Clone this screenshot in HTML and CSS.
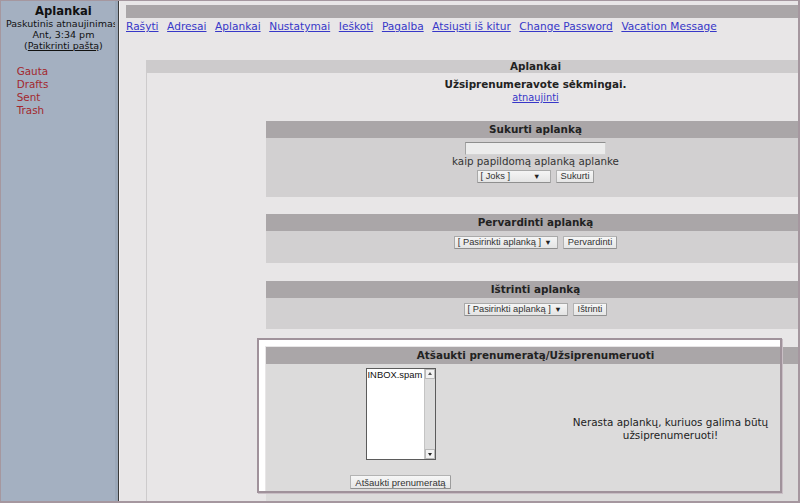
FILE: index.html
```html
<!DOCTYPE html>
<html lang="lt">
<head>
<meta charset="utf-8">
<title>Aplankai</title>
<link rel="stylesheet" href="styles.css">
</head>
<body>
<div class="window">
  <aside class="sidebar">
    <div class="status">
      <div class="status-title">Aplankai</div>
      <div class="status-line">Paskutinis atnaujinimas:</div>
      <div class="status-line">Ant, 3:34 pm</div>
      <div class="status-line">(<a class="status-link" href="#">Patikrinti paštą</a>)</div>
    </div>
    <ul class="folders">
      <li><a class="folder" href="#">Gauta</a></li>
      <li><a class="folder" href="#">Drafts</a></li>
      <li><a class="folder" href="#">Sent</a></li>
      <li><a class="folder" href="#">Trash</a></li>
    </ul>
  </aside>
  <main class="main">
    <div class="doc">
      <div class="topbar"></div>
      <nav class="menu">
        <a href="#">Rašyti</a>
        <a href="#">Adresai</a>
        <a href="#">Aplankai</a>
        <a href="#">Nustatymai</a>
        <a href="#">Ieškoti</a>
        <a href="#">Pagalba</a>
        <a href="#">Atsiųsti iš kitur</a>
        <a href="#">Change Password</a>
        <a href="#">Vacation Message</a>
      </nav>
      <div class="panel">
        <div class="panel-head">Aplankai</div>
        <div class="panel-body">
          <div class="notice">
            <div class="notice-title">Užsiprenumeravote sėkmingai.</div>
            <div><a class="notice-link" href="#">atnaujinti</a></div>
          </div>

          <section class="box box-create">
            <div class="box-head">Sukurti aplanką</div>
            <div class="box-body">
              <input class="text-input" type="text">
              <div class="hint">kaip papildomą aplanką aplanke</div>
              <div class="controls">
                <span class="select select-short"><span class="select-text">[ Joks ]</span><span class="select-arrow">▼</span></span>
                <button class="btn" type="button">Sukurti</button>
              </div>
            </div>
          </section>

          <section class="box box-rename">
            <div class="box-head">Pervardinti aplanką</div>
            <div class="box-body">
              <div class="controls">
                <span class="select select-long"><span class="select-text">[ Pasirinkti aplanką ]</span><span class="select-arrow">▼</span></span>
                <button class="btn" type="button">Pervardinti</button>
              </div>
            </div>
          </section>

          <section class="box box-delete">
            <div class="box-head">Ištrinti aplanką</div>
            <div class="box-body">
              <div class="controls">
                <span class="select select-long"><span class="select-text">[ Pasirinkti aplanką ]</span><span class="select-arrow">▼</span></span>
                <button class="btn" type="button">Ištrinti</button>
              </div>
            </div>
          </section>

          <section class="box box-subscribe">
            <div class="box-head">Atšaukti prenumeratą/Užsiprenumeruoti</div>
            <div class="box-body sub-grid">
              <div class="sub-left">
                <div class="listbox">
                  <div class="listbox-items"><div class="listbox-item">INBOX.spam</div></div>
                  <div class="scrollbar">
                    <span class="scroll-btn scroll-up"></span>
                    <span class="scroll-track"></span>
                    <span class="scroll-btn scroll-down"></span>
                  </div>
                </div>
                <button class="btn btn-tall" type="button">Atšaukti prenumeratą</button>
              </div>
              <div class="sub-right">Nerasta aplankų, kuriuos galima būtų užsiprenumeruoti!</div>
            </div>
          </section>
        </div>
      </div>
    </div>
  </main>
  <div class="highlight"></div>
</div>
</body>
</html>
```

FILE: styles.css
```css
* { box-sizing: border-box; }

html, body {
  margin: 0;
  padding: 0;
}

body {
  background: #ffffff;
  font-family: "DejaVu Sans", Verdana, sans-serif;
  color: #222222;
}

.window {
  position: relative;
  width: 800px;
  height: 503px;
  display: flex;
  overflow: hidden;
  background: #e8e6e7;
  border: 1px solid #a5979f;
  border-right-width: 2px;
  border-bottom-width: 2px;
}

/* ---------- left frame ---------- */
.sidebar {
  flex: none;
  width: 117px;
  background: #a4b0c1;
  border-right: 3px solid #9ba8b9;
  overflow: hidden;
}

.status {
  width: max-content;
  padding-left: 5px;
  text-align: center;
  white-space: nowrap;
  color: #111111;
}

.status-title {
  margin-top: 4px;
  font-size: 11.6px;
  line-height: 13px;
  font-weight: bold;
}

.status-line {
  font-size: 9.5px;
  line-height: 11px;
}

.status-link {
  color: #111111;
  text-decoration: underline;
}

.folders {
  list-style: none;
  margin: 14px 0 0;
  padding: 0 0 0 15.7px;
  font-size: 10.4px;
  line-height: 13px;
}

.folder {
  color: #a3282e;
  text-decoration: none;
}

/* ---------- right frame ---------- */
.main {
  flex: 1;
  min-width: 0;
  overflow: hidden;
  border-left: 1px solid #3b3b3b;
  box-shadow: inset 1px 0 0 #f4f2f3;
}

.doc {
  width: 820px;
  margin-left: 7px;
}

.topbar {
  height: 13px;
  margin-top: 4px;
  background: #aaa6a8;
}

.menu {
  display: flex;
  gap: 8.6px;
  margin-top: 1px;
  font-size: 10.6px;
  line-height: 14px;
  white-space: nowrap;
}

.menu a {
  color: #3737c8;
  text-decoration: underline;
}

.panel {
  width: 779px;
  margin: 27px 0 0 20px;
  border: 1px solid #cdcbcc;
  border-top: 0;
  padding-bottom: 40px;
}

.panel-head {
  height: 13px;
  line-height: 13px;
  background: #cdcbcc;
  text-align: center;
  font-size: 10.4px;
  font-weight: bold;
  color: #222222;
}

.notice {
  padding-top: 5px;
  text-align: center;
  font-size: 10.4px;
  line-height: 13px;
}

.notice-title {
  font-weight: bold;
}

.notice-link {
  font-size: 9.8px;
  color: #3737c8;
  text-decoration: underline;
}

.box {
  width: 540px;
  margin: 17px auto 0;
}

.box-rename { margin-top: 17px; }
.box-delete { margin-top: 18px; }
.box-subscribe { margin-top: 18px; }

.box-head {
  height: 17px;
  line-height: 17px;
  background: #aaa6a8;
  text-align: center;
  font-size: 10.4px;
  font-weight: bold;
  color: #222222;
}

.box-body {
  background: #d2d0d1;
  text-align: center;
  padding: 5px 0 14px;
}

.box-create .box-body { padding: 4px 0 14px; }
.box-delete .box-body { padding: 5px 0 13px; }

.text-input {
  display: block;
  width: 141px;
  height: 13px;
  margin: 0 auto;
  padding: 0;
  background: #ececec;
  border: 1px solid #d4d4d4;
  border-top-color: #8e8e8e;
  border-left-color: #a4a4a4;
}

.hint {
  font-size: 10.3px;
  line-height: 12px;
  color: #333333;
}

.controls {
  display: flex;
  justify-content: center;
  gap: 5px;
}

.box-create .controls { margin-top: 3px; }

.select {
  position: relative;
  display: inline-block;
  height: 13px;
  padding-left: 3px;
  text-align: left;
  background: linear-gradient(#f5f5f5, #e4e4e4);
  border: 1px solid #a9a9a9;
  border-bottom-color: #8f8f8f;
  border-radius: 1px;
  font-family: "Liberation Sans", Arial, sans-serif;
  font-size: 9.3px;
  line-height: 11px;
  color: #333333;
}

.select-short { width: 74px; }
.select-long { width: 104px; }

.select-arrow {
  position: absolute;
  right: 5px;
  top: 0;
  font-size: 7.5px;
  line-height: 11px;
  color: #222222;
}

.select-short .select-arrow { right: 9px; }

.btn {
  height: 13px;
  margin: 0;
  padding: 0 4px;
  background: linear-gradient(#f6f6f6, #e6e6e6);
  border: 1px solid #b3b3b3;
  border-bottom-color: #909090;
  border-right-color: #9c9c9c;
  border-radius: 1px;
  font-family: "Liberation Sans", Arial, sans-serif;
  font-size: 9.3px;
  line-height: 11px;
  color: #333333;
}

.btn-tall {
  height: 14px;
  margin-top: 15px;
  font-size: 9.5px;
}

/* subscribe / unsubscribe */
.sub-grid {
  display: grid;
  grid-template-columns: 1fr 1fr;
  padding: 4px 0 14px;
  background: #dcdbdb;
}

.sub-left {
  display: flex;
  flex-direction: column;
  align-items: center;
}

.listbox {
  display: flex;
  width: 70px;
  height: 92px;
  background: #ffffff;
  border: 1px solid #5b5b5b;
}

.listbox-items {
  flex: 1;
  text-align: left;
  padding-left: 1px;
}

.listbox-item {
  font-family: "Liberation Sans", Arial, sans-serif;
  font-size: 9.4px;
  line-height: 11px;
  color: #111111;
  white-space: nowrap;
}

.scrollbar {
  flex: none;
  width: 11px;
  display: flex;
  flex-direction: column;
  background: #dcdcdc;
  border-left: 1px solid #c4c4c4;
}

.scroll-track {
  flex: 1;
}

.scroll-btn {
  position: relative;
  height: 10px;
  background: #f2f2f2;
  border: 1px solid #b9b9b9;
}

.scroll-up::after,
.scroll-down::after {
  content: "";
  position: absolute;
  left: 2px;
  top: 2px;
  border-left: 2.5px solid transparent;
  border-right: 2.5px solid transparent;
}

.scroll-up::after {
  border-bottom: 3px solid #555555;
}

.scroll-down::after {
  top: 3px;
  border-top: 3px solid #222222;
}

.sub-right {
  align-self: center;
  padding: 0 14px;
  font-size: 10.4px;
  line-height: 13px;
  color: #222222;
}

/* selection highlight drawn over the last section */
.highlight {
  position: absolute;
  left: 256px;
  top: 337px;
  width: 525px;
  height: 155px;
  border: 2px solid #a0929b;
  box-shadow: inset 6px 6px 0 #ffffff, 1px 1px 0 #c9bec5;
  pointer-events: none;
}
```
